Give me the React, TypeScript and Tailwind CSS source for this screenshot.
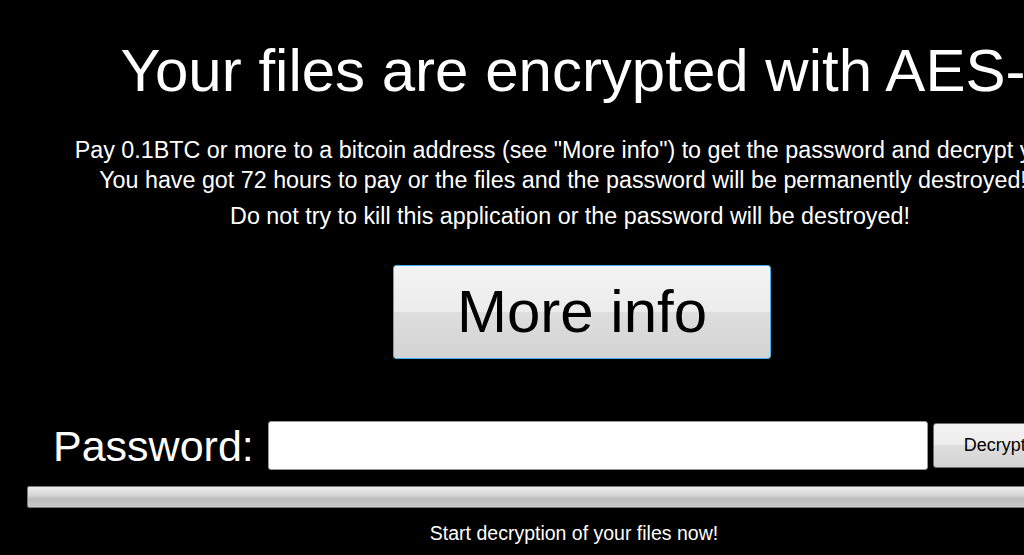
export default function App() {
  return (
    <div className="w-[1024px] h-[555px] overflow-hidden bg-black text-white font-['Liberation_Sans',Arial,sans-serif]">
      <div className="w-[1140px] flex flex-col items-center">
        <h1 className="mt-[39px] ml-[106px] text-[60px] leading-[64px] whitespace-nowrap">
          Your files are encrypted with AES-256
        </h1>
        <div className="mt-[32px] flex flex-col items-center text-[23.3px] leading-[30px]">
          <p className="ml-[54px] whitespace-nowrap">
            Pay 0.1BTC or more to a bitcoin address (see "More info") to get the password and decrypt your files.
          </p>
          <p className="mr-[14px] whitespace-nowrap">
            You have got 72 hours to pay or the files and the password will be permanently destroyed!
          </p>
          <p className="mt-[6px] whitespace-nowrap">
            Do not try to kill this application or the password will be destroyed!
          </p>
        </div>
        <button className="mt-[34px] ml-[24px] w-[378px] h-[94px] rounded-[3px] border border-[#3fb3e6] bg-[linear-gradient(#f3f3f3_0%,#ececec_50%,#dedede_50%,#d3d3d3_100%)] text-black text-[60px] leading-none">
          More info
        </button>
        <div className="mt-[62px] self-stretch flex items-center pl-[53px]">
          <span className="text-[43px] leading-[48px] whitespace-nowrap">Password:</span>
          <div className="ml-[14px] w-[660px] h-[49px] shrink-0 bg-white rounded-[3px] border border-[#9a9a9a]" />
          <button className="ml-[5px] w-[124px] h-[45px] shrink-0 rounded-[3px] border border-[#707070] bg-[linear-gradient(#f3f3f3_0%,#ececec_50%,#dedede_50%,#d3d3d3_100%)] text-black text-[18px]">
            Decrypt
          </button>
        </div>
        <div className="mt-[16px] self-stretch mx-[27px] h-[22px] rounded-[2px] border border-[#7a7a7a] bg-[linear-gradient(#ededed_0%,#d6d6d6_40%,#bcbcbc_60%,#c9c9c9_100%)]" />
        <p className="mt-[13px] ml-[8px] text-[19.5px] leading-[24px] whitespace-nowrap">
          Start decryption of your files now!
        </p>
      </div>
    </div>
  );
}
